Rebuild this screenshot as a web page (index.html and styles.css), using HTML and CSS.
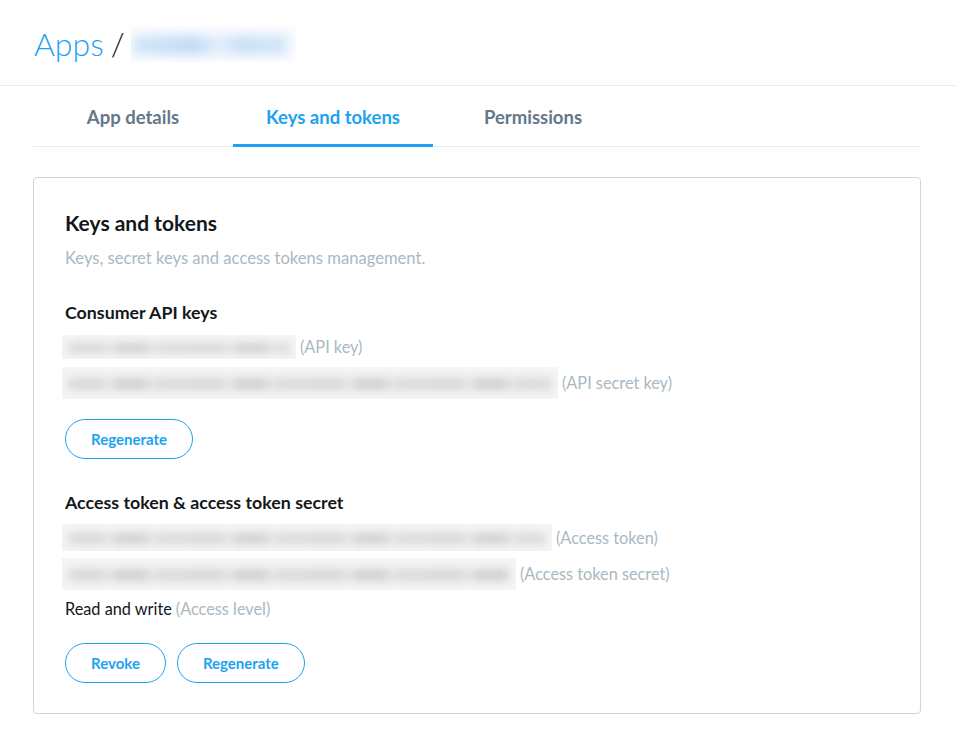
FILE: index.html
```html
<!DOCTYPE html>
<html lang="en">
<head>
    <meta charset="UTF-8">
    <meta name="viewport" content="width=device-width, initial-scale=1.0">
    <title>Apps - Keys and tokens</title>
    <link rel="stylesheet" href="styles.css">
</head>
<body>
    <header class="page-header">
        <h1 class="page-title">
            <span class="crumb">Apps</span>
            <span class="sep">/</span>
            <span class="blurred app-name"></span>
        </h1>
    </header>

    <nav class="tabs">
        <a class="tab">App details</a>
        <a class="tab active">Keys and tokens</a>
        <a class="tab">Permissions</a>
    </nav>

    <section class="card">
        <h2 class="card-title">Keys and tokens</h2>
        <p class="card-subtitle">Keys, secret keys and access tokens management.</p>

        <h3 class="section-title">Consumer API keys</h3>
        <div class="key-row">
            <span class="blurred key w-api"></span>
            <span class="hint">(API key)</span>
        </div>
        <div class="key-row">
            <span class="blurred key tall w-api-secret"></span>
            <span class="hint">(API secret key)</span>
        </div>
        <div class="actions">
            <button class="btn">Regenerate</button>
        </div>

        <h3 class="section-title">Access token &amp; access token secret</h3>
        <div class="key-row first-token">
            <span class="blurred key mid w-token"></span>
            <span class="hint">(Access token)</span>
        </div>
        <div class="key-row">
            <span class="blurred key tall w-token-secret"></span>
            <span class="hint">(Access token secret)</span>
        </div>
        <div class="key-row plain">
            <span class="value">Read and write</span>
            <span class="hint">(Access level)</span>
        </div>
        <div class="actions">
            <button class="btn">Revoke</button>
            <button class="btn">Regenerate</button>
        </div>
    </section>
</body>
</html>
```
FILE: styles.css
```css
body {
    margin: 0;
    background-color: #fff;
    font-family: Lato, "Open Sans", Arial, sans-serif;
    color: #14171a;
}
.page-header {
    height: 86px;
    border-bottom: 1px solid #e6ecf0;
    padding-left: 34px;
    box-sizing: border-box;
}
.page-title {
    margin: 0;
    padding-top: 22px;
    font-size: 32px;
    font-weight: 300;
    line-height: 44px;
    display: flex;
    align-items: center;
}
.page-title .crumb {
    color: #1da1f2;
}
.page-title .sep {
    color: #14171a;
    margin: 0 6px 0 7px;
}
.blurred {
    display: inline-block;
    position: relative;
    overflow: hidden;
    background-color: #f5f5f5;
}
.blurred::before {
    content: "";
    position: absolute;
    left: 6px;
    right: 6px;
    top: 33%;
    bottom: 27%;
    filter: blur(5px);
    background: repeating-linear-gradient(90deg, #d6d6d6 0 38px, #e6e6e6 38px 46px, #cfcfcf 46px 80px, #e4e4e4 80px 88px, #d9d9d9 88px 120px);
}
.blurred.app-name {
    width: 165px;
    height: 36px;
    background-color: #fafcfe;
}
.blurred.app-name::before {
    left: 2px;
    right: 8px;
    top: 25%;
    bottom: 20%;
    filter: blur(5px);
    background: linear-gradient(90deg, #d4e6f9 0, #c4dcf6 40%, #e4eefa 55%, #cce1f7 70%, #d6e8f9 100%);
}
.tabs {
    display: flex;
    margin: 0 36px 0 33px;
    height: 60px;
    border-bottom: 1px solid #e6ecf0;
}
.tab {
    width: 200px;
    display: flex;
    align-items: center;
    justify-content: center;
    font-size: 18.5px;
    font-weight: 700;
    color: #657786;
    border-bottom: 3px solid transparent;
    margin-bottom: -1px;
    padding-top: 4px;
    box-sizing: border-box;
    cursor: pointer;
}
.tab.active {
    color: #1da1f2;
    border-bottom-color: #1da1f2;
}
.card {
    margin: 30px 35px 0 33px;
    border: 1px solid #ccd6dd;
    border-radius: 4px;
    padding: 31px 31px 30px;
    height: 537px;
    box-sizing: border-box;
}
.card-title {
    margin: 0;
    font-size: 21px;
    font-weight: 700;
    line-height: 28px;
}
.card-subtitle {
    margin: 10px 0 0;
    font-size: 16.6px;
    line-height: 22px;
    color: #aab8c2;
    font-weight: 400;
}
.section-title {
    margin: 31px 0 0;
    font-size: 17.8px;
    font-weight: 700;
    line-height: 24px;
}
.key-row {
    display: flex;
    align-items: center;
    margin-top: 11px;
    font-size: 16.3px;
    line-height: 24px;
}
.key-row.first-token {
    margin-top: 10px;
}
.key-row + .key-row {
    margin-top: 8px;
}
.key-row.first-token + .key-row {
    margin-top: 7px;
}
.key-row.plain {
    margin-top: 7px;
}
.key {
    height: 24px;
    margin-left: -3px;
    margin-right: 4px;
}
.key.mid {
    height: 27px;
}
.key.tall {
    height: 32px;
}
.w-api { width: 234px; }
.w-api-secret { width: 496px; }
.w-token { width: 490px; }
.w-token-secret { width: 454px; }
.hint {
    color: #aab8c2;
}
.value {
    color: #14171a;
    margin-right: 4px;
}
.actions {
    display: flex;
    gap: 11px;
    margin-top: 20px;
}
.key-row.plain + .actions {
    margin-top: 22px;
}
.btn {
    height: 40px;
    padding: 0 25px;
    border: 1px solid #1da1f2;
    border-radius: 20px;
    background: #fff;
    color: #1da1f2;
    font-family: inherit;
    font-size: 15px;
    font-weight: 700;
    cursor: pointer;
}
.actions + .section-title {
    margin-top: 31px;
}
```
